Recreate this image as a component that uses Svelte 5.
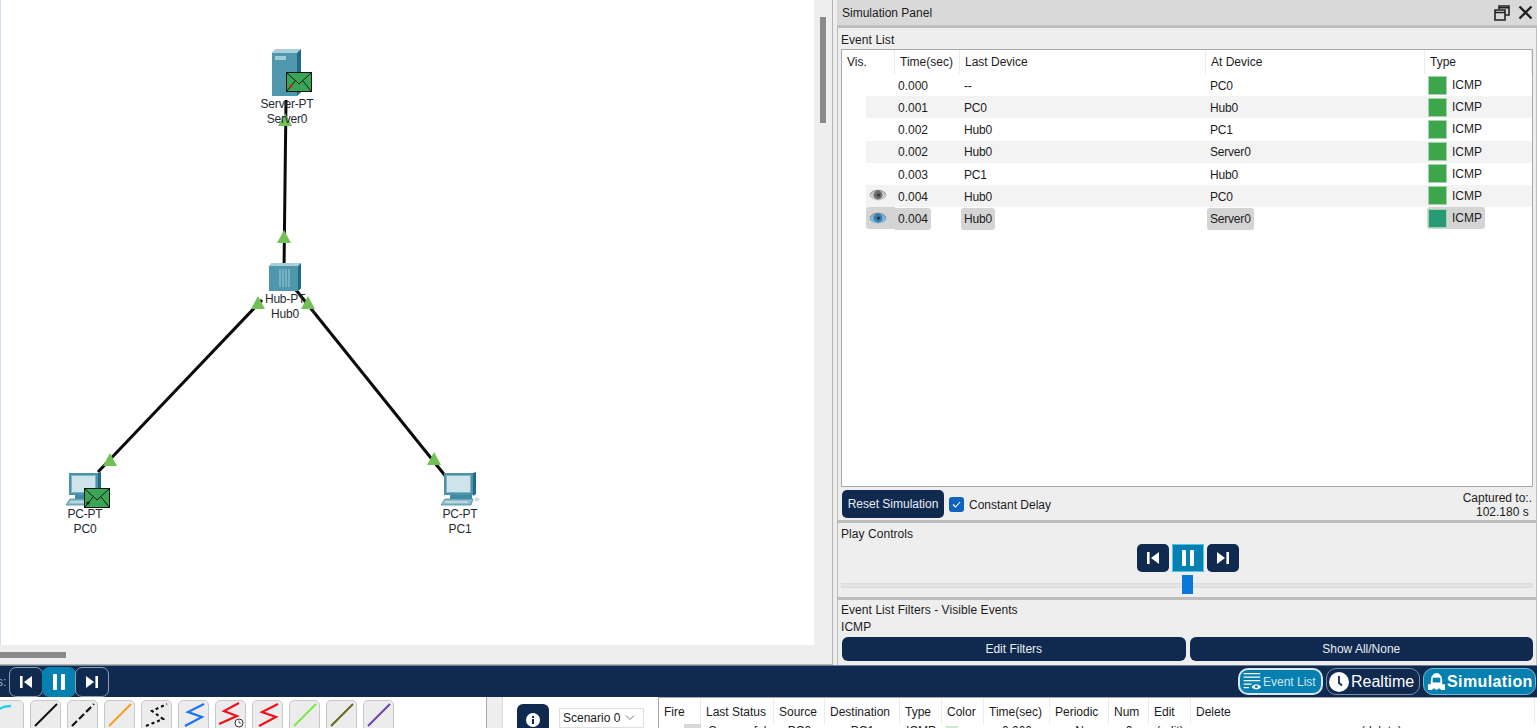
<script>
  const rows = [
    { t: '0.000', last: '--', at: 'PC0' },
    { t: '0.001', last: 'PC0', at: 'Hub0' },
    { t: '0.002', last: 'Hub0', at: 'PC1' },
    { t: '0.002', last: 'Hub0', at: 'Server0' },
    { t: '0.003', last: 'PC1', at: 'Hub0' },
    { t: '0.004', last: 'Hub0', at: 'PC0', eye: 'grey' },
    { t: '0.004', last: 'Hub0', at: 'Server0', eye: 'blue', sel: true }
  ];
  const tools = [
    { c: '#22d3ee', d: 'M-6 24C2 10 8 6 18 6', w: 2.4 },
    { c: '#111', d: 'M5 26L27 4', w: 2 },
    { c: '#111', d: 'M5 26L27 4', w: 2.2, dash: '7 3' },
    { c: '#f59e1b', d: 'M5 26L27 4', w: 2 },
    { c: '#111', d: 'M5 26L22 19L11 11L26 4', w: 2.2, dash: '3 3' },
    { c: '#1a73f0', d: 'M7 26L24 17L10 12L26 4', w: 2.2 },
    { c: '#f0101c', d: 'M4 24L22 16L9 11L24 3', w: 2.2, clock: true },
    { c: '#f0101c', d: 'M7 26L24 17L10 12L26 4', w: 2.2 },
    { c: '#7ce94a', d: 'M5 26L27 4', w: 2 },
    { c: '#6b6b1f', d: 'M5 26L27 4', w: 2.2 },
    { c: '#6f42a8', d: 'M5 26L27 4', w: 2 }
  ];
  const heads = [
    ['Fire', 42], ['Last Status', 73], ['Source', 51], ['Destination', 75], ['Type', 42],
    ['Color', 42], ['Time(sec)', 66], ['Periodic', 59], ['Num', 40], ['Edit', 42], ['Delete', 344]
  ];
  const row0 = ['', 'Successful', 'PC0', 'PC1', 'ICMP', '', '0.000', 'N', '0', '(edit)', '(delete)'];
  const triangles = [[285, 120], [284, 237], [258, 303], [308, 303], [110, 460], [434, 459]];
  const links = [[286, 100, 284, 270], [262, 300, 98, 472], [296, 290, 447, 478]];
</script>

{#snippet envelope(x, y, dot)}
  <g transform="translate({x} {y})">
    <rect x="0.5" y="0.5" width="25" height="19" fill="#3aa655" stroke="#0d1a12" />
    <path d="M1 1L13 12L25 1M1 19L9 9M25 19L17 9" fill="none" stroke="#0d1a12" stroke-width="1" />
    <circle cx={dot ? 5 : 4} cy={dot ? 14 : 15} r="1.6" fill={dot ? '#e0202c' : '#0d1a12'} />
  </g>
{/snippet}

{#snippet pc(x, y)}
  <g transform="translate({x} {y})">
    <path d="M3 1H32V23H3Z" fill="#4a93aa" />
    <path d="M32 1L35 0V22L32 24Z" fill="#1f6c84" />
    <rect x="5.5" y="3.5" width="24" height="17" fill="#cfe4ea" stroke="#7fb3c3" />
    <path d="M9 23H31V27H9Z" fill="#3f8ba3" />
    <path d="M4 27H32L30 33H0Z" fill="#8fbdcb" stroke="#3f8ba3" stroke-width=".8" />
    <path d="M4 30H27" stroke="#fff" stroke-width=".8" />
  </g>
{/snippet}

{#snippet eyeIcon(dark, light)}
  <svg class="eye" width="20" height="13" viewBox="0 0 20 13">
    <path d="M1 6.5C5 0 15 0 19 6.5C15 13 5 13 1 6.5Z" fill={light} />
    <circle cx="10" cy="6" r="4.4" fill={dark} />
    <circle cx="10.5" cy="6" r="1.5" fill="#2a3138" />
    <path d="M2 5C6 0 14 0 18 5" fill="none" stroke="#555" stroke-width=".7" />
  </svg>
{/snippet}

{#snippet prevIcon()}
  <svg width="14" height="14" viewBox="0 0 14 14"><path d="M1 1H3.6V13H1ZM13 1V13L5 7Z" fill="#fff" /></svg>
{/snippet}
{#snippet pauseIcon()}
  <svg width="14" height="16" viewBox="0 0 14 16"><rect x="1" y="0" width="4" height="16" rx="1" fill="#fff" /><rect x="9" y="0" width="4" height="16" rx="1" fill="#fff" /></svg>
{/snippet}
{#snippet nextIcon()}
  <svg width="14" height="14" viewBox="0 0 14 14"><path d="M1 1V13L9 7ZM10.4 1H13V13H10.4Z" fill="#fff" /></svg>
{/snippet}

<div class="app">
  <div class="top">
    <div class="workspace">
      <div class="canvas-row">
        <div class="canvas">
          <svg class="diagram" width="813" height="645" viewBox="0 0 813 645">
            {#each links as l}
              <line x1={l[0]} y1={l[1]} x2={l[2]} y2={l[3]} stroke="#0a0a0a" stroke-width="3" />
            {/each}
            <g>
              <path d="M272 53L276 49H301V92L297 96H272Z" fill="#4f97ad" />
              <path d="M297 53L301 49V92L297 96Z" fill="#1f6c84" />
              <path d="M272 53L276 49H301L297 53Z" fill="#a8cfda" />
              <rect x="275" y="56" width="11" height="4" fill="#a3cad6" />
            </g>
            <g>
              <path d="M269 266L272 263H301V288L298 291H269Z" fill="#4f97ad" />
              <path d="M298 266L301 263V288L298 291Z" fill="#1f6c84" />
              <path d="M269 266L272 263H301L298 266Z" fill="#a8cfda" />
              <path d="M280 269V287M283 269V287M286 269V287M289 269V287" stroke="#a3cad6" stroke-width="1" />
            </g>
            {@render pc(66, 472)}
            {@render pc(441, 472)}
            <path d="M476 497l4 2l-3 3l-3-2z" fill="#c9dde3" />
            {@render envelope(286, 72, true)}
            {@render envelope(84, 488, false)}
            {#each triangles as t}
              <path d="M{t[0]} {t[1] - 7}L{t[0] + 7} {t[1] + 6}H{t[0] - 7}Z" fill="#72c156" />
            {/each}
          </svg>
          <div class="node" style="left:287px;top:97px">Server-PT<br />Server0</div>
          <div class="node" style="left:285px;top:292px">Hub-PT<br />Hub0</div>
          <div class="node" style="left:85px;top:507px">PC-PT<br />PC0</div>
          <div class="node" style="left:460px;top:507px">PC-PT<br />PC1</div>
        </div>
        <div class="vscroll"><div class="vthumb"></div></div>
      </div>
      <div class="hscroll"><div class="hthumb"></div></div>
    </div>

    <aside class="panel">
      <header class="title">
        <span>Simulation Panel</span>
        <span class="win">
          <svg width="16" height="16" viewBox="0 0 16 16"><path d="M5 4V1H15V10H11M1 5H11V15H1Z M1 7.5H11M5 2.8H15" fill="none" stroke="#222" stroke-width="1.6" /></svg>
          <svg width="15" height="15" viewBox="0 0 15 15"><path d="M1.5 1.5L13.5 13.5M13.5 1.5L1.5 13.5" stroke="#222" stroke-width="2.4" /></svg>
        </span>
      </header>

      <section class="group events">
        <div class="caption">Event List</div>
        <div class="table">
          <div class="thead grid">
            <div class="th">Vis.</div>
            <div class="th">Time(sec)</div>
            <div class="th">Last Device</div>
            <div class="th">At Device</div>
            <div class="th">Type</div>
          </div>
          {#each rows as r, i}
            <div class="tr grid" class:odd={i % 2 === 1}>
              <div class="c-vis">
                {#if r.eye}
                  <span class="vis-chip" class:chip={r.sel}>
                    {#if r.eye === 'grey'}
                      {@render eyeIcon('#6b6b6b', '#c8c8c8')}
                    {:else}
                      {@render eyeIcon('#2f7fb0', '#7fb4d8')}
                    {/if}
                  </span>
                {/if}
              </div>
              <div class="c-time"><span class:chip={r.sel}>{r.t}</span></div>
              <div class="c-dev"><span class:chip={r.sel}>{r.last}</span></div>
              <div class="c-dev"><span class:chip={r.sel}>{r.at}</span></div>
              <div class="c-type">
                <span class="type" class:chip={r.sel}>
                  <i class="swatch" class:teal={r.sel}></i>ICMP
                </span>
              </div>
            </div>
          {/each}
        </div>
        <div class="actions">
          <button class="reset">Reset Simulation</button>
          <span class="check">
            <svg width="15" height="15" viewBox="0 0 15 15"><rect width="15" height="15" rx="3" fill="#0f62bd" /><path d="M4 7.5L6.5 10L11 5" fill="none" stroke="#fff" stroke-width="1.1" /></svg>
            Constant Delay
          </span>
          <div class="captured">Captured to:.<br />102.180 s&nbsp;</div>
        </div>
      </section>

      <section class="group play">
        <div class="caption">Play Controls</div>
        <div class="play-buttons">
          <span class="pbtn">{@render prevIcon()}</span>
          <span class="pbtn active">{@render pauseIcon()}</span>
          <span class="pbtn">{@render nextIcon()}</span>
        </div>
        <div class="slider"><span class="knob"></span></div>
      </section>

      <section class="group filters">
        <div class="caption">Event List Filters - Visible Events</div>
        <div class="caption">ICMP</div>
        <div class="filter-buttons">
          <button>Edit Filters</button>
          <button>Show All/None</button>
        </div>
      </section>
    </aside>
  </div>

  <div class="navbar">
    <div class="nav-left">
      <span class="cut">s:</span>
      <span class="nbtn">{@render prevIcon()}</span>
      <span class="nbtn active">{@render pauseIcon()}</span>
      <span class="nbtn">{@render nextIcon()}</span>
    </div>
    <div class="nav-right">
      <span class="mode evl">
        <svg width="21" height="21" viewBox="0 0 24 24"><path d="M3 3H22M3 7H22M3 11H22M3 15H12M3 19H9" stroke="#fff" stroke-width="1.6" fill="none" /><path d="M12 18C15 14 20 14 23 18C20 22 15 22 12 18Z" fill="#fff" /><circle cx="17.5" cy="18" r="1.6" fill="#0680b0" /></svg>
        Event List
      </span>
      <span class="mode real">
        <svg width="20" height="20" viewBox="0 0 20 20"><circle cx="10" cy="10" r="10" fill="#fff" /><path d="M10 4V11L13 13.5" fill="none" stroke="#10294f" stroke-width="1.8" /></svg>
        Realtime
      </span>
      <span class="mode sim">
        <svg width="19" height="19" viewBox="0 0 20 20"><path d="M4 10C4 4 7 1 10 1S16 4 16 10V16H4Z" fill="#fff" /><rect x="6" y="6" width="8" height="5" fill="#0680b0" /><path d="M1 13H19V19H15L13 17L10 19L7 17L5 19H1Z" fill="#fff" /></svg>
        Simulation
      </span>
    </div>
  </div>

  <div class="bottom">
    <div class="tools">
      {#each tools as t}
        <div class="tool">
          <svg width="31" height="31" viewBox="0 0 31 31">
            <path d={t.d} fill="none" stroke={t.c} stroke-width={t.w} stroke-dasharray={t.dash} />
            {#if t.clock}
              <circle cx="24" cy="23" r="4" fill="#fff" stroke="#333" stroke-width="1" />
              <path d="M24 20.5V23H26" fill="none" stroke="#333" stroke-width=".8" />
            {/if}
          </svg>
        </div>
      {/each}
    </div>
    <div class="splitter"></div>
    <div class="scenario">
      <span class="info">
        <svg width="14" height="14" viewBox="0 0 14 14"><circle cx="7" cy="7" r="7" fill="#fff" /><rect x="6" y="6" width="2" height="5" fill="#10294f" /><rect x="6" y="3" width="2" height="2" fill="#10294f" /></svg>
      </span>
      <span class="select">
        Scenario 0
        <svg width="12" height="8" viewBox="0 0 12 8"><path d="M2 1.5L6 5.5L10 1.5" fill="none" stroke="#777" stroke-width="1" /></svg>
      </span>
    </div>
    <div class="pdu">
      <div class="pdu-row">
        {#each heads as h}
          <div class="pth" style="width:{h[1]}px">{h[0]}</div>
        {/each}
      </div>
      <div class="pdu-row cells">
        {#each heads as h, i}
          <div class="ptd" class:al={i === 10} style="width:{h[1]}px">
            {#if i === 0}<i class="fire"></i>{:else if i === 5}<i class="mini"></i>{:else}{row0[i]}{/if}
          </div>
        {/each}
      </div>
    </div>
  </div>
</div>

<style>
  :global(body) {
    margin: 0;
    overflow: hidden;
    background: #eee;
    font-family: "Liberation Sans", Arial, sans-serif;
    font-size: 12px;
    color: #1c1c1c;
  }
  .app {
    width: 1537px;
    height: 728px;
    display: flex;
    flex-direction: column;
    overflow: hidden;
  }
  .top {
    height: 665px;
    display: flex;
    flex: none;
  }
  .workspace {
    width: 833px;
    flex: none;
    display: flex;
    flex-direction: column;
    border-right: 1px solid #b4b4b4;
    box-sizing: border-box;
    border-bottom: 1px solid #b4b4b4;
  }
  .canvas-row {
    height: 645px;
    display: flex;
    flex: none;
  }
  .canvas {
    position: relative;
    width: 814px;
    flex: none;
    background: #fff;
    box-shadow: inset 1px 0 #cfe0ee;
  }
  .diagram {
    position: absolute;
    left: 0;
    top: 0;
  }
  .node {
    position: absolute;
    transform: translateX(-50%);
    text-align: center;
    white-space: nowrap;
    line-height: 15px;
    letter-spacing: -0.2px;
    color: #1f2a33;
  }
  .vscroll {
    flex: 1;
    background: #eee;
    padding: 17px 0 0 6px;
  }
  .vthumb {
    width: 6px;
    height: 106px;
    background: #8a8a8a;
  }
  .hscroll {
    flex: 1;
    background: #eee;
    padding-top: 7px;
  }
  .hthumb {
    width: 66px;
    height: 6px;
    background: #8a8a8a;
  }
  .panel {
    width: 700px;
    margin-left: 4px;
    display: flex;
    flex-direction: column;
    flex: none;
  }
  .title {
    height: 26px;
    box-sizing: border-box;
    background: #d9d9d9;
    border-bottom: 1px solid #c4c4c4;
    display: flex;
    justify-content: space-between;
    align-items: center;
    padding: 0 4px 0 5px;
    flex: none;
  }
  .win {
    display: flex;
    align-items: center;
    gap: 8px;
  }
  .group {
    border: 1px solid #bdbdbd;
    border-width: 2px 1px 1px;
    box-sizing: border-box;
    padding: 0 3px;
    flex: none;
    background: #eee;
  }
  .caption {
    line-height: 17px;
    height: 17px;
    letter-spacing: 0.06px;
  }
  .events {
    height: 495px;
    padding-top: 4px;
  }
  .table {
    height: 438px;
    box-sizing: border-box;
    width: 692px;
    border: 1px solid #a8a8a8;
    background: #fff;
  }
  .grid {
    display: grid;
    grid-template-columns: 53px 65px 246px 219px 1fr;
  }
  .thead {
    height: 24px;
    align-items: stretch;
    background: #fff;
  }
  .th {
    padding: 5px 0 0 5px;
    border-right: 1px solid #ececec;
    line-height: 15px;
  }
  .tr {
    height: 22.2px;
    align-items: center;
    box-sizing: border-box;
  }
  .tr.odd {
    background: linear-gradient(to right, #fff 24px, #f3f3f3 24px);
  }
  .c-vis {
    padding-left: 24px;
    height: 100%;
  }
  .vis-chip {
    display: flex;
    width: 29px;
    height: 22px;
    align-items: center;
    padding-left: 2px;
    box-sizing: border-box;
    border-radius: 3px 0 0 3px;
  }
  .eye {
    display: block;
  }
  .c-time {
    padding-left: 3px;
  }
  .c-time span,
  .c-dev span {
    display: inline-block;
    line-height: 22px;
  }
  .c-time span.chip {
    padding: 0 3px 0 3px;
    margin-left: -3px;
    border-radius: 0 3px 3px 0;
  }
  .c-dev {
    padding-left: 4px;
    letter-spacing: -0.2px;
  }
  .c-dev span.chip {
    padding: 0 3px;
    margin-left: -3px;
    border-radius: 3px;
  }
  .chip {
    background: #d4d4d4;
  }
  .c-type {
    height: 100%;
    padding-left: 2px;
  }
  .type {
    display: inline-flex;
    align-items: center;
    height: 22px;
    padding: 0 3px 0 1px;
    gap: 5px;
    border-radius: 3px;
  }
  .swatch {
    display: block;
    width: 19px;
    height: 19px;
    box-sizing: border-box;
    background: #3ca64b;
    border: 1px solid #a7d2ae;
  }
  .swatch.teal {
    background: #289a76;
  }
  .actions {
    display: flex;
    align-items: center;
    height: 33px;
    margin-top: 1px;
  }
  button {
    font: inherit;
    border: 0;
    background: #10294f;
    color: #e8edf3;
    padding: 0;
  }
  .reset {
    width: 102px;
    height: 28px;
    margin-left: 1px;
    margin-bottom: 2px;
    border-radius: 5px;
  }
  .check {
    display: flex;
    align-items: center;
    gap: 5px;
    margin-left: 5px;
  }
  .captured {
    margin-left: auto;
    text-align: right;
    line-height: 14px;
    padding-right: 1px;
  }
  .play {
    height: 77px;
    padding-top: 3px;
  }
  .play-buttons {
    display: flex;
    justify-content: center;
    gap: 3px;
    margin-top: 1px;
    padding-left: 1px;
  }
  .pbtn {
    width: 32px;
    height: 28px;
    border-radius: 5px;
    background: #10294f;
    display: flex;
    align-items: center;
    justify-content: center;
  }
  .pbtn.active {
    background: #0680b0;
    border-radius: 1px;
    outline: 1px solid #4ec6e8;
    outline-offset: -1px;
  }
  .slider {
    height: 3px;
    background: #e2e4e2;
    border: 1px solid #dcdcdc;
    margin-top: 11px;
    position: relative;
  }
  .knob {
    position: absolute;
    left: 340px;
    top: -9px;
    width: 11px;
    height: 19px;
    background: #0a78d6;
  }
  .filters {
    height: 67px;
    padding-top: 2px;
    border-bottom: 0;
  }
  .filter-buttons {
    display: flex;
    gap: 4px;
    margin-top: 1px;
    padding-left: 1px;
  }
  .filter-buttons button {
    flex: 1;
    height: 24px;
    border-radius: 6px;
  }
  .navbar {
    height: 32px;
    flex: none;
    background: #10294f;
    display: flex;
    justify-content: space-between;
    align-items: center;
    border-top: 1px solid #6f7f92;
    box-sizing: border-box;
  }
  .nav-left {
    display: flex;
    align-items: center;
  }
  .cut {
    color: #9db2c9;
    width: 12px;
    margin-left: -3px;
  }
  .nbtn {
    width: 34px;
    height: 30px;
    box-sizing: border-box;
    border: 1px solid #8e9db0;
    border-radius: 7px;
    display: flex;
    align-items: center;
    justify-content: center;
    margin-right: -1px;
  }
  .nbtn.active {
    background: #0680b0;
    border-color: #0680b0;
  }
  .nav-right {
    display: flex;
    align-items: center;
    gap: 3px;
  }
  .mode {
    height: 27px;
    box-sizing: border-box;
    border-radius: 10px;
    display: flex;
    align-items: center;
    color: #fff;
    white-space: nowrap;
  }
  .evl {
    width: 85px;
    border: 2px solid #d8e6ee;
    background: #0680b0;
    padding-left: 1px;
    gap: 1px;
    color: #cfe6f0;
  }
  .real {
    width: 94px;
    border: 1px solid #7d8ca0;
    padding-left: 2px;
    gap: 2px;
    font-size: 16px;
  }
  .sim {
    width: 113px;
    margin-right: 1px;
    background: #0680b0;
    border: 1px solid #7ab8d2;
    padding-left: 3px;
    gap: 1px;
    font-size: 16px;
    font-weight: 700;
    letter-spacing: 0.4px;
  }
  .bottom {
    flex: 1;
    min-height: 0;
    display: flex;
    background: #fff;
    overflow: hidden;
  }
  .tools {
    width: 494px;
    flex: none;
    display: flex;
    gap: 6px;
    padding-top: 3px;
    margin-left: -7px;
  }
  .tool {
    width: 31px;
    height: 40px;
    box-sizing: border-box;
    flex: none;
    background: #ececec;
    border: 1px solid #c8c8c8;
    border-radius: 5px;
    overflow: hidden;
  }
  .tool svg {
    display: block;
    margin: -1px;
  }
  .splitter {
    width: 17px;
    flex: none;
    background: #eee;
    border-left: 1px solid #aaa;
    border-right: 1px solid #ddd;
    box-sizing: border-box;
    margin-left: -1px;
  }
  .scenario {
    width: 155px;
    flex: none;
    display: flex;
    gap: 10px;
    padding: 7px 0 0 14px;
    box-sizing: border-box;
  }
  .info {
    width: 32px;
    height: 32px;
    flex: none;
    border-radius: 6px;
    background: #10294f;
    display: flex;
    align-items: center;
    justify-content: center;
  }
  .select {
    width: 85px;
    height: 20px;
    flex: none;
    margin-top: 4px;
    box-sizing: border-box;
    border: 1px solid #e0e0e0;
    display: flex;
    align-items: center;
    justify-content: space-between;
    padding: 0 7px 0 3px;
  }
  .pdu {
    flex: 1;
    border: 1px solid #a8a8a8;
    border-width: 1px 0 0 1px;
    min-width: 0;
  }
  .pdu-row {
    display: flex;
    height: 26px;
  }
  .pth {
    box-sizing: border-box;
    flex: none;
    padding: 7px 0 0 5px;
    border-right: 1px solid #ececec;
    line-height: 15px;
  }
  .ptd {
    box-sizing: border-box;
    flex: none;
    line-height: 15px;
    text-align: center;
  }
  .ptd.al {
    padding-left: 170px;
    text-align: left;
  }
  .fire {
    display: block;
    width: 17px;
    height: 10px;
    background: #d8d8d8;
    margin-left: 25px;
  }
  .mini {
    display: block;
    width: 12px;
    height: 10px;
    margin: 2px 0 0 4px;
    background: #cfe8d2;
  }
</style>
